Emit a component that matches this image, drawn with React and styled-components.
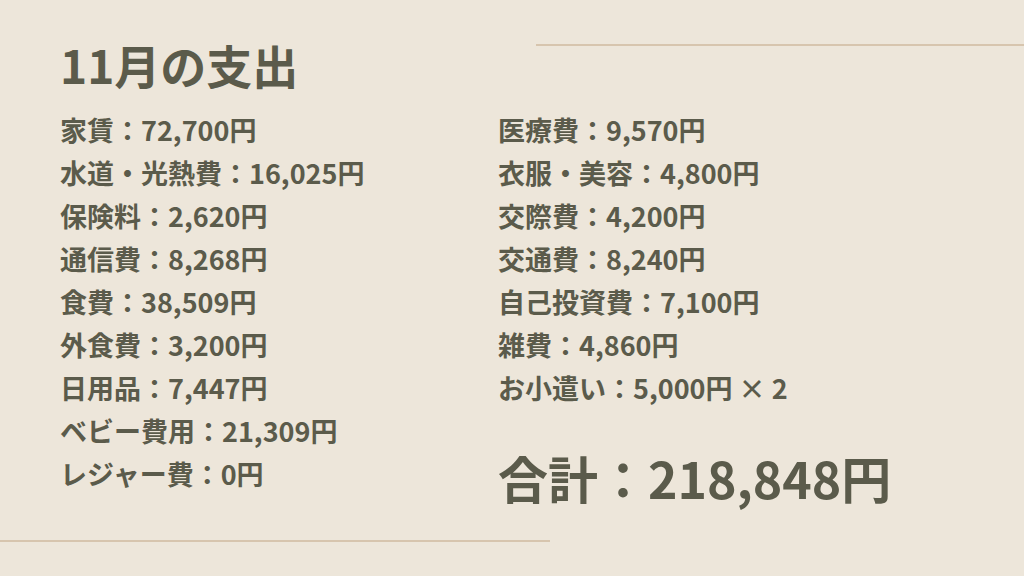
import React from 'react';
import styled, { createGlobalStyle } from 'styled-components';

const GlobalStyle = createGlobalStyle`
  html, body {
    margin: 0;
    padding: 0;
    background: #ede6da;
  }
  body {
    font-family: "Noto Sans CJK JP", "Noto Sans", sans-serif;
  }
`;

const Slide = styled.div`
  width: 1024px;
  height: 576px;
  overflow: hidden;
  background: #ede6da;
  color: #5b5b4b;
  display: flex;
  flex-direction: column;
`;

const Header = styled.div`
  display: flex;
  align-items: flex-start;
`;

const Title = styled.h1`
  margin: 36px 0 0 60px;
  font-size: 46px;
  line-height: 56px;
  font-weight: 700;
`;

const Rule = styled.div`
  height: 2px;
  background: #d7c5ae;
  width: ${(p) => p.width}px;
  margin-top: ${(p) => p.top || 0}px;
  margin-left: ${(p) => (p.right ? 'auto' : '0')};
`;

const Columns = styled.div`
  display: grid;
  grid-template-columns: 438px 1fr;
  padding-left: 60px;
  margin-top: 16px;
`;

const List = styled.div`
  display: flex;
  flex-direction: column;
`;

const Item = styled.div`
  font-size: 27px;
  line-height: 43px;
  font-weight: 700;
  white-space: nowrap;
`;

const Total = styled.div`
  margin-top: 42px;
  font-size: 50px;
  line-height: 52px;
  font-weight: 700;
  white-space: nowrap;
`;

const left = [
  '家賃：72,700円',
  '水道・光熱費：16,025円',
  '保険料：2,620円',
  '通信費：8,268円',
  '食費：38,509円',
  '外食費：3,200円',
  '日用品：7,447円',
  'ベビー費用：21,309円',
  'レジャー費：0円',
];

const right = [
  '医療費：9,570円',
  '衣服・美容：4,800円',
  '交際費：4,200円',
  '交通費：8,240円',
  '自己投資費：7,100円',
  '雑費：4,860円',
  'お小遣い：5,000円 × 2',
];

export default function App() {
  return (
    <>
      <GlobalStyle />
      <Slide>
        <Header>
          <Title>11月の支出</Title>
          <Rule right width={488} top={44} />
        </Header>
        <Columns>
          <List>
            {left.map((t) => (
              <Item key={t}>{t}</Item>
            ))}
          </List>
          <List>
            {right.map((t) => (
              <Item key={t}>{t}</Item>
            ))}
            <Total>合計：218,848円</Total>
          </List>
        </Columns>
        <Rule width={550} top={37} />
      </Slide>
    </>
  );
}
